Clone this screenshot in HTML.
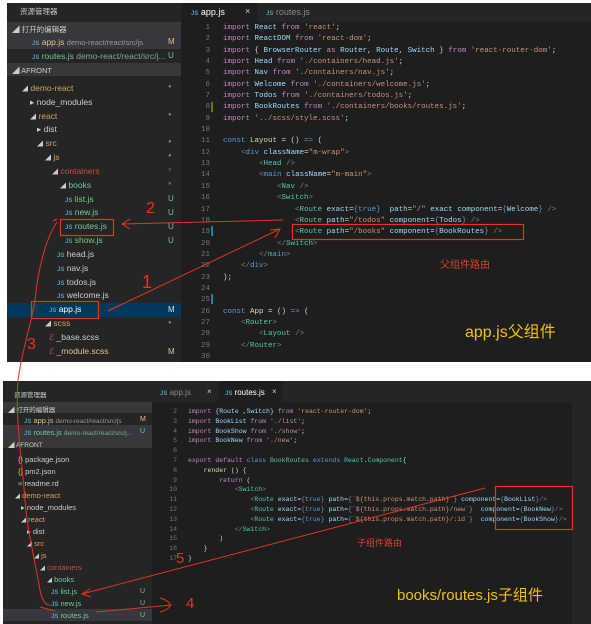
<!DOCTYPE html>
<html><head><meta charset="utf-8"><style>
*{margin:0;padding:0;box-sizing:border-box}
body{width:591px;height:624px;background:#fff;position:relative;overflow:hidden;font-family:"Liberation Sans","Noto Sans CJK SC",sans-serif}
.a{position:absolute;white-space:pre}
.sb{color:#ccc;font-size:8.5px}
.mono{font-family:"Liberation Mono",monospace}
.k{color:#c586c0}.v{color:#9cdcfe}.s{color:#ce9178}.t{color:#4ec9b0}.g{color:#808080}.b{color:#569cd6}.y{color:#dcdcaa}.w{color:#d4d4d4}
.js{color:#519aba;font-size:6px;font-weight:bold}
.gr{color:#73c991}.or{color:#d7a15a}.rd{color:#c74e39}
</style></head><body>
<!-- TOP SCREENSHOT -->
<div class="a" style="left:7px;top:3px;width:584px;height:359px;background:#1e1e1e"></div>
<div class="a" style="left:7px;top:3px;width:174px;height:359px;background:#252526"></div>
<div class="a" style="left:181px;top:3px;width:410px;height:19px;background:#252526"></div>
<div class="a" style="left:181px;top:3px;width:76px;height:19px;background:#1e1e1e"></div>
<div class="a" style="left:191px;top:7px;font-size:9px;color:#fff"><span class="js">JS</span> app.js</div>
<div class="a" style="left:245px;top:6px;font-size:9px;color:#ccc">×</div>
<div class="a" style="left:266px;top:7px;font-size:9px;color:#888"><span class="js">JS</span> routes.js</div>
<div class="a sb" style="left:20px;top:6px;font-size:7.5px">资源管理器</div>
<div class="a" style="left:7px;top:22px;width:174px;height:13px;background:#383838"></div>
<div class="a sb" style="left:12px;top:24px;font-size:7.5px">◢ 打开的编辑器</div>
<div class="a" style="left:7px;top:35px;width:174px;height:14px;background:#37373d"></div>
<div class="a sb" style="left:32px;top:37px"><span class="js">JS</span> <span style="color:#e2c08d">app.js</span> <span style="color:#999;font-size:7.5px">demo-react/react/src/js</span></div>
<div class="a" style="left:168px;top:37px;font-size:8px;color:#e2c08d">M</div>
<div class="a sb" style="left:32px;top:51px"><span class="js">JS</span> <span class="gr">routes.js</span> <span style="color:#7a9">demo-react/react/src/j...</span></div>
<div class="a" style="left:168px;top:51px;font-size:8px;color:#73c991">U</div>
<div class="a" style="left:7px;top:63px;width:174px;height:13px;background:#383838"></div>
<div class="a sb" style="left:12px;top:65px;font-size:7.5px">◢ AFRONT</div>
<div class="a" style="left:7px;top:303px;width:174px;height:14px;background:#04395e"></div>
<div class="a sb" style="left:0;top:0">
<div class="a" style="left:22px;top:83px"><span style="font-size:6px">◢</span> <span class="or">demo-react</span></div>
<div class="a" style="left:30px;top:97px">▸ node_modules</div>
<div class="a" style="left:30px;top:111px"><span style="font-size:6px">◢</span> <span class="or">react</span></div>
<div class="a" style="left:37px;top:124px">▸ dist</div>
<div class="a" style="left:37px;top:138px"><span style="font-size:6px">◢</span> <span class="or">src</span></div>
<div class="a" style="left:45px;top:152px"><span style="font-size:6px">◢</span> <span class="or">js</span></div>
<div class="a" style="left:52px;top:166px"><span style="font-size:6px">◢</span> <span class="rd">containers</span></div>
<div class="a" style="left:60px;top:180px"><span style="font-size:6px">◢</span> <span class="gr">books</span></div>
<div class="a" style="left:65px;top:194px"><span class="js">JS</span> <span class="gr">list.js</span></div>
<div class="a" style="left:65px;top:207px"><span class="js">JS</span> <span class="gr">new.js</span></div>
<div class="a" style="left:65px;top:221px"><span class="js">JS</span> <span class="gr">routes.js</span></div>
<div class="a" style="left:65px;top:235px"><span class="js">JS</span> <span class="gr">show.js</span></div>
<div class="a" style="left:57px;top:249px"><span class="js">JS</span> head.js</div>
<div class="a" style="left:57px;top:263px"><span class="js">JS</span> nav.js</div>
<div class="a" style="left:57px;top:277px"><span class="js">JS</span> todos.js</div>
<div class="a" style="left:57px;top:290px"><span class="js">JS</span> welcome.js</div>
<div class="a" style="left:49px;top:304px;color:#fff"><span class="js">JS</span> app.js</div>
<div class="a" style="left:45px;top:318px"><span style="font-size:6px">◢</span> <span class="or">scss</span></div>
<div class="a" style="left:49px;top:332px"><span style="color:#c6538c">ℰ</span> _base.scss</div>
<div class="a" style="left:49px;top:346px"><span style="color:#c6538c">ℰ</span> <span style="color:#e2c08d">_module.scss</span></div>
</div>
<div class="a" style="left:168px;top:84px;font-size:6px;color:#8a7a60">●</div>
<div class="a" style="left:168px;top:112px;font-size:6px;color:#8a7a60">●</div>
<div class="a" style="left:168px;top:139px;font-size:6px;color:#8a7a60">●</div>
<div class="a" style="left:168px;top:153px;font-size:6px;color:#8a7a60">●</div>
<div class="a" style="left:168px;top:167px;font-size:6px;color:#7a4030">●</div>
<div class="a" style="left:168px;top:181px;font-size:6px;color:#4a7a5a">●</div>
<div class="a" style="left:168px;top:194px;font-size:8px;color:#73c991">U</div>
<div class="a" style="left:168px;top:208px;font-size:8px;color:#73c991">U</div>
<div class="a" style="left:168px;top:222px;font-size:8px;color:#73c991">U</div>
<div class="a" style="left:168px;top:236px;font-size:8px;color:#73c991">U</div>
<div class="a" style="left:168px;top:305px;font-size:8px;color:#ddd">M</div>
<div class="a" style="left:168px;top:320px;font-size:6px;color:#8a7a60">●</div>
<div class="a" style="left:168px;top:347px;font-size:8px;color:#e2c08d">M</div>
<div class="a" style="left:211px;top:102px;width:2px;height:10px;background:#587c0c"></div>
<div class="a" style="left:211px;top:226px;width:2px;height:10px;background:#1b81a8"></div>
<div class="a" style="left:211px;top:294px;width:2px;height:10px;background:#1b81a8"></div>
<div class="a mono" style="left:196px;top:23px;font-size:7.5px;line-height:11.34px;color:#6e7681;text-align:right;width:14px">1
2
3
4
5
6
7
8
9
10
11
12
13
14
15
16
17
18
19
20
21
22
23
24
25
26
27
28
29
30</div>
<div class="a mono w" style="left:223px;top:23px;font-size:7.5px;line-height:11.34px"><span class="k">import</span> <span class="v">React</span> <span class="k">from</span> <span class="s">'react'</span>;
<span class="k">import</span> <span class="v">ReactDOM</span> <span class="k">from</span> <span class="s">'react-dom'</span>;
<span class="k">import</span> { <span class="v">BrowserRouter</span> <span class="k">as</span> <span class="v">Router</span>, <span class="v">Route</span>, <span class="v">Switch</span> } <span class="k">from</span> <span class="s">'react-router-dom'</span>;
<span class="k">import</span> <span class="v">Head</span> <span class="k">from</span> <span class="s">'./containers/head.js'</span>;
<span class="k">import</span> <span class="v">Nav</span> <span class="k">from</span> <span class="s">'./containers/nav.js'</span>;
<span class="k">import</span> <span class="v">Welcome</span> <span class="k">from</span> <span class="s">'./containers/welcome.js'</span>;
<span class="k">import</span> <span class="v">Todos</span> <span class="k">from</span> <span class="s">'./containers/todos.js'</span>;
<span class="k">import</span> <span class="v">BookRoutes</span> <span class="k">from</span> <span class="s">'./containers/books/routes.js'</span>;
<span class="k">import</span> <span class="s">'../scss/style.scss'</span>;

<span class="b">const</span> <span class="y">Layout</span> = () <span class="b">=&gt;</span> (
    <span class="g">&lt;</span><span class="b">div</span> <span class="v">className</span>=<span class="s">"m-wrap"</span><span class="g">&gt;</span>
        <span class="g">&lt;</span><span class="t">Head</span> <span class="g">/&gt;</span>
        <span class="g">&lt;</span><span class="b">main</span> <span class="v">className</span>=<span class="s">"m-main"</span><span class="g">&gt;</span>
            <span class="g">&lt;</span><span class="t">Nav</span> <span class="g">/&gt;</span>
            <span class="g">&lt;</span><span class="t">Switch</span><span class="g">&gt;</span>
                <span class="g">&lt;</span><span class="t">Route</span> <span class="v">exact</span>=<span class="b">{true}</span>  <span class="v">path</span>=<span class="s">"/"</span> <span class="v">exact</span> <span class="v">component</span>=<span class="b">{</span><span class="v">Welcome</span><span class="b">}</span> <span class="g">/&gt;</span>
                <span class="g">&lt;</span><span class="t">Route</span> <span class="v">path</span>=<span class="s">"/todos"</span> <span class="v">component</span>=<span class="b">{</span><span class="v">Todos</span><span class="b">}</span> <span class="g">/&gt;</span>
                <span class="g">&lt;</span><span class="t">Route</span> <span class="v">path</span>=<span class="s">"/books"</span> <span class="v">component</span>=<span class="b">{</span><span class="v">BookRoutes</span><span class="b">}</span> <span class="g">/&gt;</span>
            <span class="g">&lt;/</span><span class="t">Switch</span><span class="g">&gt;</span>
        <span class="g">&lt;/</span><span class="b">main</span><span class="g">&gt;</span>
    <span class="g">&lt;/</span><span class="b">div</span><span class="g">&gt;</span>
);


<span class="b">const</span> <span class="y">App</span> = () <span class="b">=&gt;</span> (
    <span class="g">&lt;</span><span class="t">Router</span><span class="g">&gt;</span>
        <span class="g">&lt;</span><span class="t">Layout</span> <span class="g">/&gt;</span>
    <span class="g">&lt;/</span><span class="t">Router</span><span class="g">&gt;</span></div>
<div class="a" style="left:440px;top:256px;font-size:10px;color:#e0402a">父组件路由</div>
<div class="a" style="left:465px;top:318px;font-size:16px;color:#f2c200">app.js父组件</div>

<!-- BOTTOM SCREENSHOT -->
<div class="a" style="left:3px;top:381px;width:588px;height:243px;background:#1e1e1e"></div>
<div class="a" style="left:3px;top:381px;width:149px;height:243px;background:#252526"></div>
<div class="a" style="left:152px;top:381px;width:439px;height:21px;background:#252526"></div>
<div class="a" style="left:218px;top:381px;width:64px;height:21px;background:#1e1e1e"></div>
<div class="a" style="left:160px;top:388px;font-size:8px;color:#888"><span class="js">JS</span> app.js</div>
<div class="a" style="left:207px;top:387px;font-size:8px;color:#ccc">×</div>
<div class="a" style="left:225px;top:388px;font-size:8px;color:#fff"><span class="js">JS</span> routes.js</div>
<div class="a" style="left:272px;top:387px;font-size:8px;color:#ccc">×</div>
<div class="a" style="left:572px;top:402px;width:19px;height:222px;background:#252526"></div>
<div class="a sb" style="left:14px;top:389px;font-size:6.5px">资源管理器</div>
<div class="a" style="left:3px;top:402px;width:149px;height:11px;background:#383838"></div>
<div class="a sb" style="left:8px;top:404px;font-size:6.5px">◢ 打开的编辑器</div>
<div class="a" style="left:3px;top:425px;width:149px;height:12px;background:#37373d"></div>
<div class="a" style="left:3px;top:437px;width:149px;height:11px;background:#383838"></div>
<div class="a sb" style="left:8px;top:439px;font-size:6.5px">◢ AFRONT</div>
<div class="a" style="left:3px;top:609px;width:149px;height:12px;background:#37373d"></div>
<div class="a sb" style="left:0;top:0;font-size:7.5px">
<div class="a" style="left:24px;top:416px"><span class="js">JS</span> <span style="color:#e2c08d">app.js</span> <span style="color:#999;font-size:6.5px">demo-react/react/src/js</span></div>
<div class="a" style="left:24px;top:428px"><span class="js">JS</span> <span class="gr">routes.js</span> <span style="color:#7a9;font-size:6.5px">demo-react/react/src/j...</span></div>
<div class="a" style="left:18px;top:455px"><span style="color:#cbcb41">{}</span> package.json</div>
<div class="a" style="left:18px;top:467px"><span style="color:#cbcb41">{}</span> pm2.json</div>
<div class="a" style="left:18px;top:479px"><span style="color:#999">≡</span> readme.rd</div>
<div class="a" style="left:15px;top:491px"><span style="font-size:5px">◢</span> <span class="or">demo-react</span></div>
<div class="a" style="left:21px;top:503px">▸ node_modules</div>
<div class="a" style="left:21px;top:515px"><span style="font-size:5px">◢</span> <span class="or">react</span></div>
<div class="a" style="left:27px;top:527px">▸ dist</div>
<div class="a" style="left:27px;top:539px"><span style="font-size:5px">◢</span> <span class="or">src</span></div>
<div class="a" style="left:34px;top:551px"><span style="font-size:5px">◢</span> <span class="or">js</span></div>
<div class="a" style="left:40px;top:563px"><span style="font-size:5px">◢</span> <span class="rd">containers</span></div>
<div class="a" style="left:47px;top:575px"><span style="font-size:5px">◢</span> <span class="gr">books</span></div>
<div class="a" style="left:51px;top:587px"><span class="js">JS</span> <span class="gr">list.js</span></div>
<div class="a" style="left:51px;top:599px"><span class="js">JS</span> <span class="gr">new.js</span></div>
<div class="a" style="left:51px;top:611px"><span class="js">JS</span> <span class="gr">routes.js</span></div>
</div>
<div class="a" style="left:140px;top:416px;font-size:7px;color:#e2c08d">M</div>
<div class="a" style="left:140px;top:428px;font-size:7px;color:#73c991">U</div>
<div class="a" style="left:140px;top:588px;font-size:7px;color:#73c991">U</div>
<div class="a" style="left:140px;top:600px;font-size:7px;color:#73c991">U</div>
<div class="a" style="left:140px;top:612px;font-size:7px;color:#73c991">U</div>
<div class="a mono" style="left:160px;top:407px;font-size:6.5px;line-height:9.8px;color:#6e7681;text-align:right;width:17px">2
3
4
5
6
7
8
9
10
11
12
13
14
15
16
17</div>
<div class="a mono w" style="left:188px;top:407px;font-size:6.5px;line-height:9.8px"><span class="k">import</span> {<span class="v">Route</span> ,<span class="v">Switch</span>} <span class="k">from</span> <span class="s">'react-router-dom'</span>;
<span class="k">import</span> <span class="v">BookList</span> <span class="k">from</span> <span class="s">'./list'</span>;
<span class="k">import</span> <span class="v">BookShow</span> <span class="k">from</span> <span class="s">'./show'</span>;
<span class="k">import</span> <span class="v">BookNew</span> <span class="k">from</span> <span class="s">'./new'</span>;

<span class="k">export</span> <span class="k">default</span> <span class="b">class</span> <span class="t">BookRoutes</span> <span class="b">extends</span> <span class="t">React</span>.<span class="t">Component</span>{
    <span class="y">render</span> () {
        <span class="k">return</span> (
            <span class="g">&lt;</span><span class="t">Switch</span><span class="g">&gt;</span>
                <span class="g">&lt;</span><span class="t">Route</span> <span class="v">exact</span>=<span class="b">{true}</span> <span class="v">path</span>=<span class="b">{</span><span class="s">`${this.props.match.path}`</span><span class="b">}</span> <span class="v">component</span>=<span class="b">{</span><span class="v">BookList</span><span class="b">}</span><span class="g">/&gt;</span>
                <span class="g">&lt;</span><span class="t">Route</span> <span class="v">exact</span>=<span class="b">{true}</span> <span class="v">path</span>=<span class="b">{</span><span class="s">`${this.props.match.path}/new`</span><span class="b">}</span>  <span class="v">component</span>=<span class="b">{</span><span class="v">BookNew</span><span class="b">}</span><span class="g">/&gt;</span>
                <span class="g">&lt;</span><span class="t">Route</span> <span class="v">exact</span>=<span class="b">{true}</span> <span class="v">path</span>=<span class="b">{</span><span class="s">`${this.props.match.path}/:id`</span><span class="b">}</span>  <span class="v">component</span>=<span class="b">{</span><span class="v">BookShow</span><span class="b">}</span><span class="g">/&gt;</span>
            <span class="g">&lt;/</span><span class="t">Switch</span><span class="g">&gt;</span>
        )
    }
}</div>
<div class="a" style="left:357px;top:536px;font-size:9px;color:#e0402a">子组件路由</div>
<div class="a" style="left:397px;top:584px;font-size:15px;color:#f2c200">books/routes.js子组件</div>

<!-- annotations -->
<svg class="a" style="left:0;top:0" width="591" height="624" viewBox="0 0 591 624" fill="none" stroke="#e8321e" stroke-width="1">
<rect x="60.5" y="219.5" width="53" height="16" stroke-width="1.2"/>
<rect x="31.5" y="301.5" width="67" height="17" stroke-width="1.2"/>
<rect x="292.5" y="224.5" width="231" height="15" stroke-width="1.2"/>
<path d="M122 224 L283 220"/><path d="M130 219 L122 224 L130 229"/>
<path d="M108 311 L280 229"/><path d="M270 230 L280 229 L275 238"/>
<path d="M57 222 C45 240 38 270 35 300 C30 330 22 350 18 380 C15 420 22 460 25 500 C27 530 35 560 40 590 C42 600 45 605 50 605"/>
<path d="M53 221 L57 219"/>
<rect x="495.5" y="486.5" width="77" height="43" stroke-width="1.2"/>
<path d="M82 594 L485 488"/><path d="M90 589 L82 594 L91 597"/>
<path d="M96 612 L172 605 M160 598 C168 600 170 604 170 605 C170 608 165 611 160 612"/>
<path d="M40 607 L55 611"/>
</svg>
<div class="a" style="left:146px;top:200px;font-size:16px;color:#e8321e">2</div>
<div class="a" style="left:142px;top:272px;font-size:18px;color:#e8321e">1</div>
<div class="a" style="left:27px;top:336px;font-size:16px;color:#e8321e">3</div>
<div class="a" style="left:176px;top:550px;font-size:15px;color:#e8321e">5</div>
<div class="a" style="left:186px;top:595px;font-size:15px;color:#e8321e">4</div>
</body></html>
